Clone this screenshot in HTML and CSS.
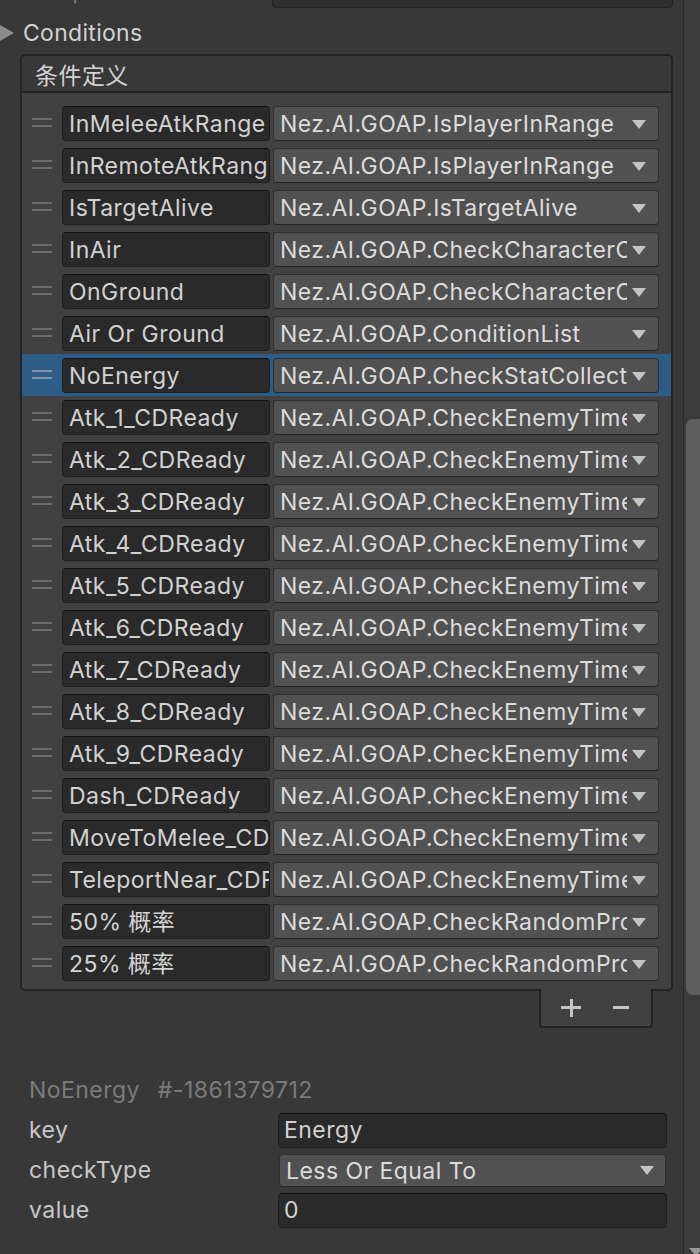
FILE: index.html
```html
<!DOCTYPE html>
<html>
<head>
<meta charset="utf-8">
<link rel="stylesheet" href="styles.css">
</head>
<body>
<div class="window">
  <div class="main">
    <div class="script-row">
      <span class="script-label">Script</span>
      <div class="objfield">
        <span class="objicon"></span>
        <span class="objtext">AIScenario</span>
        <span class="objtarget"></span>
      </div>
    </div>

    <div class="foldout"><span class="tri"></span><span>Conditions</span></div>

    <div class="list-header">条件定义</div>
    <div class="list">
      <div class="row"><span class="handle"></span><div class="name">InMeleeAtkRange</div><div class="dd"><span class="ddtext">Nez.AI.GOAP.IsPlayerInRange</span><svg class="arrow" viewBox="0 0 14 9" width="14" height="9"><path d="M0 0H14L7 9Z"/></svg></div></div>
      <div class="row"><span class="handle"></span><div class="name">InRemoteAtkRange</div><div class="dd"><span class="ddtext">Nez.AI.GOAP.IsPlayerInRange</span><svg class="arrow" viewBox="0 0 14 9" width="14" height="9"><path d="M0 0H14L7 9Z"/></svg></div></div>
      <div class="row"><span class="handle"></span><div class="name">IsTargetAlive</div><div class="dd"><span class="ddtext">Nez.AI.GOAP.IsTargetAlive</span><svg class="arrow" viewBox="0 0 14 9" width="14" height="9"><path d="M0 0H14L7 9Z"/></svg></div></div>
      <div class="row"><span class="handle"></span><div class="name">InAir</div><div class="dd"><span class="ddtext">Nez.AI.GOAP.CheckCharacterCondition</span><svg class="arrow" viewBox="0 0 14 9" width="14" height="9"><path d="M0 0H14L7 9Z"/></svg></div></div>
      <div class="row"><span class="handle"></span><div class="name">OnGround</div><div class="dd"><span class="ddtext">Nez.AI.GOAP.CheckCharacterCondition</span><svg class="arrow" viewBox="0 0 14 9" width="14" height="9"><path d="M0 0H14L7 9Z"/></svg></div></div>
      <div class="row"><span class="handle"></span><div class="name">Air Or Ground</div><div class="dd"><span class="ddtext">Nez.AI.GOAP.ConditionList</span><svg class="arrow" viewBox="0 0 14 9" width="14" height="9"><path d="M0 0H14L7 9Z"/></svg></div></div>
      <div class="row sel"><span class="handle"></span><div class="name">NoEnergy</div><div class="dd"><span class="ddtext">Nez.AI.GOAP.CheckStatCollection</span><svg class="arrow" viewBox="0 0 14 9" width="14" height="9"><path d="M0 0H14L7 9Z"/></svg></div></div>
      <div class="row"><span class="handle"></span><div class="name">Atk_1_CDReady</div><div class="dd"><span class="ddtext">Nez.AI.GOAP.CheckEnemyTimer</span><svg class="arrow" viewBox="0 0 14 9" width="14" height="9"><path d="M0 0H14L7 9Z"/></svg></div></div>
      <div class="row"><span class="handle"></span><div class="name">Atk_2_CDReady</div><div class="dd"><span class="ddtext">Nez.AI.GOAP.CheckEnemyTimer</span><svg class="arrow" viewBox="0 0 14 9" width="14" height="9"><path d="M0 0H14L7 9Z"/></svg></div></div>
      <div class="row"><span class="handle"></span><div class="name">Atk_3_CDReady</div><div class="dd"><span class="ddtext">Nez.AI.GOAP.CheckEnemyTimer</span><svg class="arrow" viewBox="0 0 14 9" width="14" height="9"><path d="M0 0H14L7 9Z"/></svg></div></div>
      <div class="row"><span class="handle"></span><div class="name">Atk_4_CDReady</div><div class="dd"><span class="ddtext">Nez.AI.GOAP.CheckEnemyTimer</span><svg class="arrow" viewBox="0 0 14 9" width="14" height="9"><path d="M0 0H14L7 9Z"/></svg></div></div>
      <div class="row"><span class="handle"></span><div class="name">Atk_5_CDReady</div><div class="dd"><span class="ddtext">Nez.AI.GOAP.CheckEnemyTimer</span><svg class="arrow" viewBox="0 0 14 9" width="14" height="9"><path d="M0 0H14L7 9Z"/></svg></div></div>
      <div class="row"><span class="handle"></span><div class="name">Atk_6_CDReady</div><div class="dd"><span class="ddtext">Nez.AI.GOAP.CheckEnemyTimer</span><svg class="arrow" viewBox="0 0 14 9" width="14" height="9"><path d="M0 0H14L7 9Z"/></svg></div></div>
      <div class="row"><span class="handle"></span><div class="name">Atk_7_CDReady</div><div class="dd"><span class="ddtext">Nez.AI.GOAP.CheckEnemyTimer</span><svg class="arrow" viewBox="0 0 14 9" width="14" height="9"><path d="M0 0H14L7 9Z"/></svg></div></div>
      <div class="row"><span class="handle"></span><div class="name">Atk_8_CDReady</div><div class="dd"><span class="ddtext">Nez.AI.GOAP.CheckEnemyTimer</span><svg class="arrow" viewBox="0 0 14 9" width="14" height="9"><path d="M0 0H14L7 9Z"/></svg></div></div>
      <div class="row"><span class="handle"></span><div class="name">Atk_9_CDReady</div><div class="dd"><span class="ddtext">Nez.AI.GOAP.CheckEnemyTimer</span><svg class="arrow" viewBox="0 0 14 9" width="14" height="9"><path d="M0 0H14L7 9Z"/></svg></div></div>
      <div class="row"><span class="handle"></span><div class="name">Dash_CDReady</div><div class="dd"><span class="ddtext">Nez.AI.GOAP.CheckEnemyTimer</span><svg class="arrow" viewBox="0 0 14 9" width="14" height="9"><path d="M0 0H14L7 9Z"/></svg></div></div>
      <div class="row"><span class="handle"></span><div class="name">MoveToMelee_CDReady</div><div class="dd"><span class="ddtext">Nez.AI.GOAP.CheckEnemyTimer</span><svg class="arrow" viewBox="0 0 14 9" width="14" height="9"><path d="M0 0H14L7 9Z"/></svg></div></div>
      <div class="row"><span class="handle"></span><div class="name">TeleportNear_CDReady</div><div class="dd"><span class="ddtext">Nez.AI.GOAP.CheckEnemyTimer</span><svg class="arrow" viewBox="0 0 14 9" width="14" height="9"><path d="M0 0H14L7 9Z"/></svg></div></div>
      <div class="row"><span class="handle"></span><div class="name">50% 概率</div><div class="dd"><span class="ddtext">Nez.AI.GOAP.CheckRandomProbability</span><svg class="arrow" viewBox="0 0 14 9" width="14" height="9"><path d="M0 0H14L7 9Z"/></svg></div></div>
      <div class="row"><span class="handle"></span><div class="name">25% 概率</div><div class="dd"><span class="ddtext">Nez.AI.GOAP.CheckRandomProbability</span><svg class="arrow" viewBox="0 0 14 9" width="14" height="9"><path d="M0 0H14L7 9Z"/></svg></div></div>
    </div>
    <div class="footer">
      <span class="plus"></span>
      <span class="minus"></span>
    </div>

    <div class="props">
      <div class="prop-title"><span>NoEnergy</span><span class="hash">#-1861379712</span></div>
      <div class="prop"><span class="plabel">key</span><div class="pfield">Energy</div></div>
      <div class="prop"><span class="plabel">checkType</span><div class="pdd"><span class="ddtext">Less Or Equal To</span><svg class="arrow" viewBox="0 0 14 9" width="14" height="9"><path d="M0 0H14L7 9Z"/></svg></div></div>
      <div class="prop"><span class="plabel">value</span><div class="pfield">0</div></div>
    </div>
  </div>
  <div class="scrollbar">
    <div class="thumb"></div>
    <svg class="sb-down" viewBox="0 0 14 8" width="14" height="8"><path d="M0 0H14L7 8Z"/></svg>
  </div>
</div>
</body>
</html>
```
FILE: styles.css
```css
* { box-sizing: border-box; }
html, body { margin: 0; padding: 0; }
body {
  background: #383838;
  font-family: Inter, "Noto Sans CJK SC", sans-serif;
  font-size: 23px;
  letter-spacing: 0.45px;
  color: #d2d2d2;
  height: 1254px;
  overflow: hidden;
}
.window { display: flex; height: 1254px; }
.main { width: 683px; flex: none; }

/* scrollbar */
.scrollbar {
  width: 17px; flex: none;
  border-left: 1px solid #2a2a2a;
  background: #3b3b3b;
  display: flex; flex-direction: column; align-items: flex-end;
}
.thumb {
  margin-top: 419px; width: 14px; height: 576px;
  background: #5f5f5f; border-radius: 7px 0 0 7px;
}
.sb-down { margin-top: auto; margin-bottom: -2px; margin-right: -3px; fill: #9a9a9a; }

/* script row (cut off at top) */
.script-row { display: flex; align-items: center; height: 34px; margin-top: -26px; }
.script-label { width: 272px; padding-left: 28px; color: #7b7b7b; flex: none; }
.objfield {
  width: 401px; height: 34px; flex: none;
  background: #2e2e2e; border: 1px solid #222; border-radius: 4px;
  display: flex; align-items: center; padding: 0 8px; color: #7b7b7b;
}
.objicon { width: 18px; height: 18px; background: #8a8a8a; margin-right: 6px; }
.objtext { flex: 1; }
.objtarget { width: 16px; height: 16px; border: 2px solid #8a8a8a; border-radius: 50%; }

/* foldout */
.foldout { display: flex; align-items: center; height: 38px; margin-top: 6px; margin-bottom: 2px; color: #d2d2d2; letter-spacing: 0.3px; }
.tri {
  width: 0; height: 0; margin-right: 9px;
  border-top: 8px solid transparent; border-bottom: 8px solid transparent;
  border-left: 14px solid #8c8c8c;
}

/* list */
.list-header {
  margin-left: 20px; width: 653px; height: 39px;
  border: 2px solid #232323; border-radius: 5px 5px 0 0;
  background: #383838; padding-left: 13px;
  display: flex; align-items: center; color: #d2d2d2;
}
.list {
  margin-left: 20px; width: 653px;
  border: 2px solid #232323; border-top: 0; border-radius: 0 0 5px 5px;
  background: #414141; padding: 9px 0 5px;
}
.row { display: flex; align-items: flex-start; height: 42px; padding-top: 4px; }
.row.sel { background: #2c5d87; }
.handle {
  flex: none; width: 20px; height: 9px; margin: 12px 10px 0 10px;
  border-top: 2px solid #6c6c6c; border-bottom: 2px solid #6c6c6c;
}
.row.sel .handle { border-color: #8a8fa0; }
.name {
  flex: none; width: 208px; height: 35px;
  background: #2a2a2a; border: 1px solid #1e1e1e; border-top-color: #121212;
  border-radius: 4px; padding: 1px 1px 0 6px;
  line-height: 33px; white-space: nowrap; overflow: hidden; color: #d2d2d2;
}
.dd {
  flex: none; width: 386px; height: 35px; margin-left: 3px;
  background: #515151; border: 1px solid #2f2f2f; border-bottom-color: #242424;
  border-radius: 4px; display: flex; align-items: center; color: #dcdcdc;
}
.ddtext { flex: 1; min-width: 0; padding-left: 6px; padding-top: 1px; white-space: nowrap; overflow: hidden; }
.arrow { flex: none; margin: 1px 12px 0 5px; fill: #c4c4c4; }

/* footer */
.footer {
  margin-left: 539px; margin-top: -2px; width: 114px; height: 39px;
  border: 2px solid #232323; border-top: 0; border-radius: 0 0 4px 4px;
  background: #414141; display: flex; align-items: center; padding-left: 20px;
}
.plus { width: 20px; height: 18px; position: relative; display: block; }
.plus::before, .plus::after { content: ""; position: absolute; background: #c4c4c4; }
.plus::before { left: 0; right: 0; top: 7.5px; height: 3px; }
.plus::after { top: 0; bottom: 0; left: 8.5px; width: 3px; }
.minus { width: 16px; height: 3px; background: #c4c4c4; margin-left: 32px; display: block; }

/* properties */
.props { padding: 42px 0 0 29px; }
.prop-title { height: 40px; line-height: 40px; color: #7b7b7b; }
.hash { margin-left: 18px; }
.prop { display: flex; align-items: center; height: 40px; }
.plabel { width: 249px; flex: none; color: #c8c8c8; }
.pfield {
  width: 389px; height: 35px; flex: none;
  background: #2a2a2a; border: 1px solid #1e1e1e; border-top-color: #0e0e0e;
  border-radius: 4px; padding-left: 5px; line-height: 33px; color: #d2d2d2;
}
.pdd {
  width: 387px; height: 33px; flex: none; margin-left: 1px;
  background: #515151; border: 1px solid #2f2f2f; border-bottom-color: #242424;
  border-radius: 4px; display: flex; align-items: center; color: #dcdcdc;
}
.pdd .arrow { margin-right: 11px; }
```
